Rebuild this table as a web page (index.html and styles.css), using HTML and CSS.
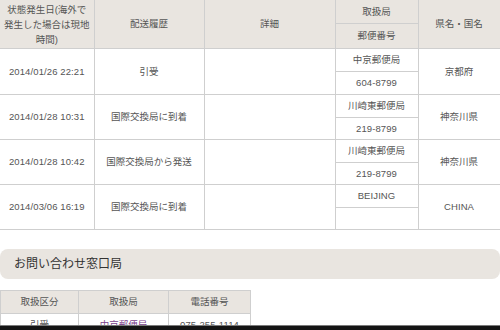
FILE: index.html
```html
<!DOCTYPE html>
<html lang="ja">
<head>
<meta charset="utf-8">
<link rel="stylesheet" href="styles.css">
</head>
<body>
<table class="track">
  <colgroup>
    <col class="c-date"><col class="c-hist"><col class="c-detail"><col class="c-office"><col class="c-pref">
  </colgroup>
  <tr class="r-h1">
    <th rowspan="2" class="th-date">状態発生日(海外で<br>発生した場合は現地<br>時間)</th>
    <th rowspan="2">配送履歴</th>
    <th rowspan="2">詳細</th>
    <th>取扱局</th>
    <th rowspan="2">県名・国名</th>
  </tr>
  <tr class="r-h2"><th>郵便番号</th></tr>

  <tr class="r-a1">
    <td rowspan="2" class="num">2014/01/26 22:21</td>
    <td rowspan="2">引受</td>
    <td rowspan="2"></td>
    <td>中京郵便局</td>
    <td rowspan="2">京都府</td>
  </tr>
  <tr class="r-a2"><td class="num">604-8799</td></tr>

  <tr class="r-b1">
    <td rowspan="2" class="num">2014/01/28 10:31</td>
    <td rowspan="2">国際交換局に到着</td>
    <td rowspan="2"></td>
    <td>川崎東郵便局</td>
    <td rowspan="2">神奈川県</td>
  </tr>
  <tr class="r-b2"><td class="num">219-8799</td></tr>

  <tr class="r-b1">
    <td rowspan="2" class="num">2014/01/28 10:42</td>
    <td rowspan="2">国際交換局から発送</td>
    <td rowspan="2"></td>
    <td>川崎東郵便局</td>
    <td rowspan="2">神奈川県</td>
  </tr>
  <tr class="r-b2"><td class="num">219-8799</td></tr>

  <tr class="r-b1">
    <td rowspan="2" class="num">2014/03/06 16:19</td>
    <td rowspan="2">国際交換局に到着</td>
    <td rowspan="2"></td>
    <td class="num">BEIJING</td>
    <td rowspan="2" class="num">CHINA</td>
  </tr>
  <tr class="r-b2"><td></td></tr>
</table>

<h2 class="section-title">お問い合わせ窓口局</h2>

<table class="contact">
  <colgroup><col class="k1"><col class="k2"><col class="k3"></colgroup>
  <tr class="r-ch"><th>取扱区分</th><th>取扱局</th><th>電話番号</th></tr>
  <tr class="r-cd"><td>引受</td><td><a class="office-link" href="#">中京郵便局</a></td><td class="num">075-255-1114</td></tr>
</table>

<div class="bottom-bar"></div>
</body>
</html>
```
FILE: styles.css
```css
html, body {
  margin: 0;
  padding: 0;
  background: #ffffff;
}
body {
  font-family: "Liberation Sans", "Noto Sans CJK JP", sans-serif;
  color: #555555;
  font-size: 10px;
  overflow: hidden;
}
table {
  border-collapse: collapse;
  table-layout: fixed;
}
th, td {
  border: 1px solid #cfcfcf;
  padding: 0;
  text-align: center;
  vertical-align: middle;
  font-weight: normal;
  font-size: 9.5px;
  line-height: 14px;
}
th {
  background: #e9e5e0;
}
.num {
  font-family: "Liberation Sans", sans-serif;
  font-size: 9.5px;
  letter-spacing: 0.1px;
}
.track {
  width: 500px;
  margin-top: -1px;
  border-left: 0;
}
.track tr > :first-child { border-left: 0; }
.c-date { width: 94px; }
.c-hist { width: 110px; }
.c-detail { width: 131px; }
.c-office { width: 83px; }
.c-pref { width: 82px; }
.th-date { line-height: 15px; }
.r-h1 { height: 24px; }
.r-h2 { height: 25px; }
.r-a1 { height: 23px; }
.r-a2 { height: 23px; }
.r-b1 { height: 23px; }
.r-b2 { height: 22px; }

.section-title {
  margin: 19px 0 11px 0;
  height: 30px;
  background: #e9e5e0;
  border-radius: 8px;
  padding: 0 0 0 14px;
  font-size: 12px;
  font-weight: normal;
  line-height: 30px;
  color: #333333;
  width: 486px;
}
.contact {
  width: 250px;
}
.k1 { width: 78px; }
.k2 { width: 90px; }
.k3 { width: 82px; }
.r-ch { height: 23px; }
.r-cd { height: 22px; }
.office-link {
  color: #7b3f8c;
  text-decoration: none;
}
.bottom-bar {
  position: fixed;
  left: 0;
  right: 0;
  bottom: 0;
  height: 4px;
  background: #141414;
  border-top: 1px solid #7a7a7a;
}
```
